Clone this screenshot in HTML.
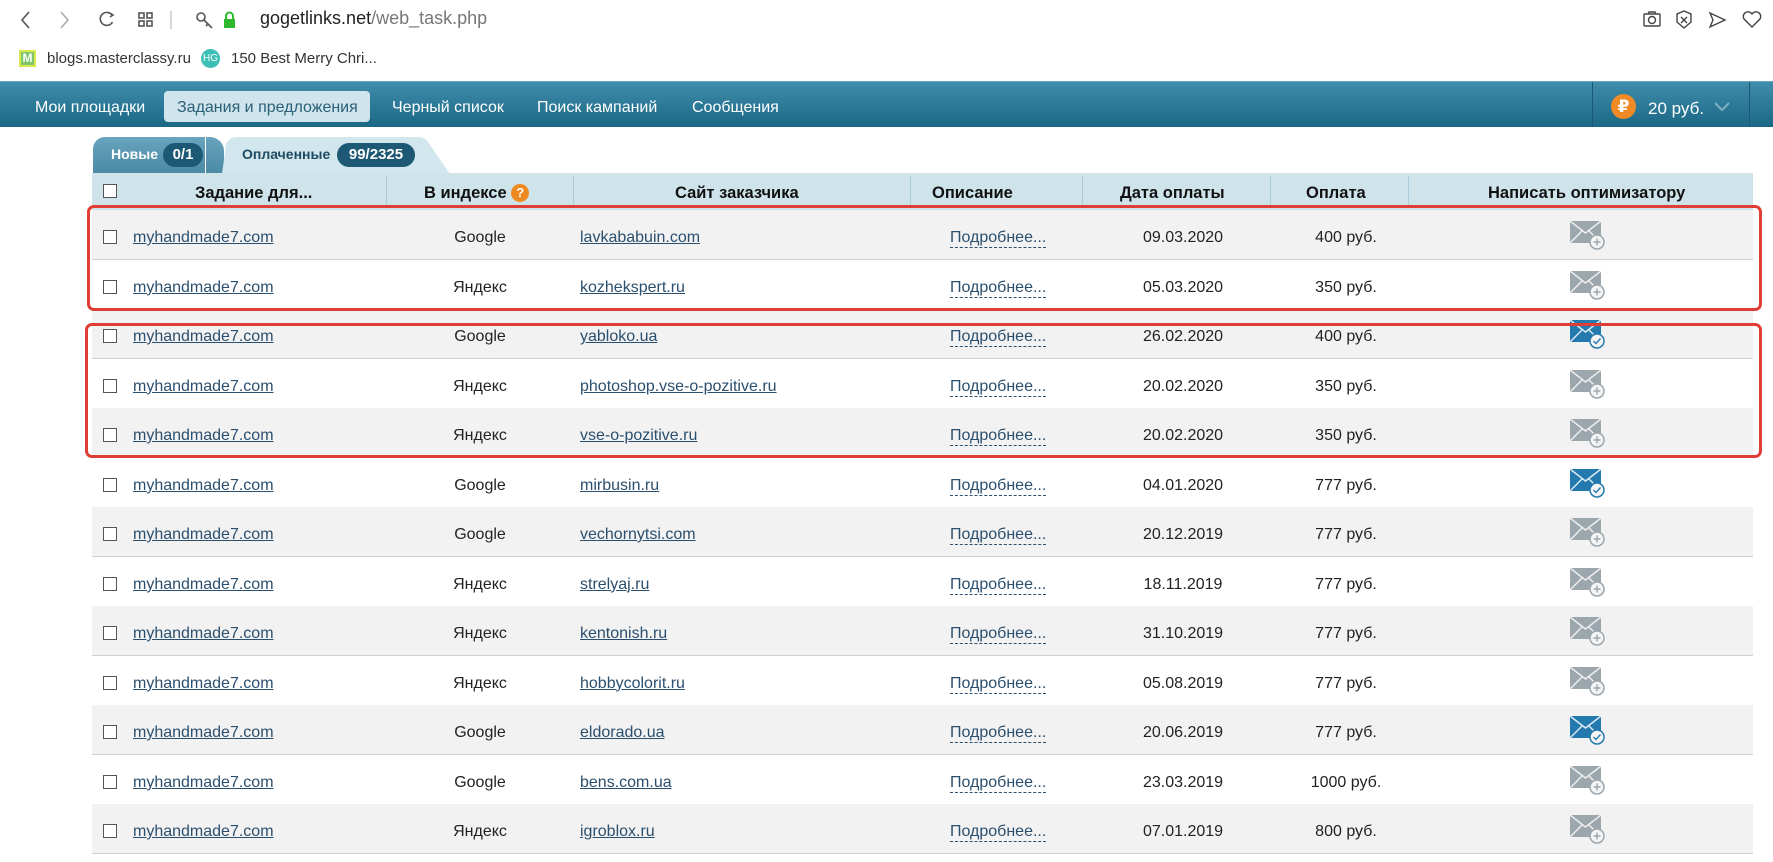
<!DOCTYPE html>
<html><head><meta charset="utf-8"><style>
*{margin:0;padding:0;box-sizing:border-box}
body{width:1773px;height:862px;overflow:hidden;background:#fff;font-family:"Liberation Sans","DejaVu Sans",sans-serif;position:relative;color:#222}
.a{position:absolute;white-space:nowrap}
.nav{position:absolute;left:0;top:81px;width:1773px;height:46px;background:linear-gradient(#3f8dab,#1b6886);border-top:1px solid #6aa7bf}
.nav .a{color:#fff;font-size:16px;top:17px}
.row{position:absolute;left:92px;width:1661px;height:50px;border-bottom:1px solid #c9d1d6}
.row .a{font-size:16px;top:19px}
.lnk{color:#2b4f6e;text-decoration:underline}
.desc{color:#2b4f6e;border-bottom:1px dashed #2b4f6e;line-height:18px}
.cb{position:absolute;left:11px;top:20px;width:14px;height:14px;border:1.5px solid #555;background:#fff}
.hd{position:absolute;left:92px;top:173px;width:1661px;height:37px;background:#cfe3eb}
.hd .a{font-weight:bold;font-size:16.5px;top:11px;color:#111}
.sep{position:absolute;top:3px;width:1px;height:30px;background:#aacbd9}
.red{position:absolute;border:3.5px solid #df3d35;border-radius:7px}
</style></head><body>
<svg class="a" style="left:18px;top:8px" width="260" height="24" viewBox="0 0 260 24" fill="none" stroke="#555" stroke-width="1.6">
<path d="M11 4 L4 12 L11 20"/><path d="M43 4 L50 12 L43 20" stroke="#aaa"/>
<path d="M94 7 A6.5 6.5 0 1 0 94.5 14"/><path d="M92 5 L95 7 L92 9" />
<rect x="121" y="5" width="5" height="5"/><rect x="129" y="5" width="5" height="5"/><rect x="121" y="13" width="5" height="5"/><rect x="129" y="13" width="5" height="5"/>
<path d="M153 3 V21" stroke="#ccc"/>
<circle cx="183" cy="9" r="4"/><path d="M186 12 L194 20 M190 16 L188 18"/>
<rect x="206" y="11" width="11" height="9" fill="#2db82d" stroke="none"/><path d="M208 11 V8 A3.5 3.5 0 0 1 215 8 V11" stroke="#2db82d" stroke-width="2"/>
</svg>
<div class="a" style="left:260px;top:8px;font-size:18px;color:#222">gogetlinks.net<span style="color:#777">/web_task.php</span></div>
<svg class="a" style="left:1640px;top:8px" width="130" height="24" viewBox="0 0 130 24" fill="none" stroke="#444" stroke-width="1.4">
<rect x="4" y="6" width="16" height="12" rx="1"/><circle cx="12" cy="12" r="3.5"/><path d="M8 6 L9 4 H15 L16 6"/>
<path d="M44 3 L51 6 V14 L44 20 L37 14 V6 Z"/><path d="M41 9 L47 15 M47 9 L41 15"/>
<path d="M70 5 L85 12 L70 19 L73 12 Z"/>
<path d="M112 19 L104 11 A4 4 0 0 1 112 6 A4 4 0 0 1 120 11 Z"/>
</svg>
<div class="a" style="left:19px;top:50px;width:17px;height:17px;background:#7fc66a;border:2px solid #d9e84a;color:#fff;font-size:12px;font-weight:bold;text-align:center;line-height:13px">M</div>
<div class="a" style="left:47px;top:50px;font-size:15px;color:#333">blogs.masterclassy.ru</div>
<div class="a" style="left:201px;top:49px;width:19px;height:19px;border-radius:50%;background:#3cbfb5;color:#fff;font-size:10px;text-align:center;line-height:19px">HG</div>
<div class="a" style="left:231px;top:50px;font-size:15px;color:#333">150 Best Merry Chri...</div>
<div class="nav">
<div class="a" style="left:35px">Мои площадки</div>
<div class="a" style="left:164px;top:9px;width:206px;height:31px;background:#cfe4ec;border-radius:4px"></div>
<div class="a" style="left:177px;color:#2a5f78">Задания и предложения</div>
<div class="a" style="left:392px">Черный список</div>
<div class="a" style="left:537px">Поиск кампаний</div>
<div class="a" style="left:692px">Сообщения</div>
<div class="a" style="left:1592px;top:0;width:1px;height:45px;background:#1a5a75"></div>
<div class="a" style="left:1611px;top:12px;width:25px;height:25px;border-radius:50%;background:#f08a24;color:#fff;font-weight:bold;font-size:17px;text-align:center;line-height:25px">₽</div>
<div class="a" style="left:1648px;font-size:17px">20 руб.</div>
<svg class="a" style="left:1714px;top:20px" width="16" height="10"><path d="M1 1 L8 8 L15 1" stroke="#7fb0c5" stroke-width="2" fill="none"/></svg>
<div class="a" style="left:1749px;top:0;width:1px;height:45px;background:#1a5a75"></div>
</div>
<div class="a" style="left:93px;top:137px;width:131px;height:36px;background:linear-gradient(#6aa4be,#4b89a5);border-radius:12px 14px 0 0"></div>
<div class="a" style="left:205px;top:137px;width:1px;height:36px;background:#fff"></div>
<div class="a" style="left:111px;top:146px;font-size:14px;font-weight:bold;color:#fff">Новые</div>
<div class="a" style="left:163px;top:143px;width:40px;height:24px;border-radius:12px;background:#1d5874;color:#fff;font-weight:bold;font-size:15px;text-align:center;line-height:24px">0/1</div>
<svg class="a" style="left:222px;top:137px" width="228" height="37"><path d="M0 37 L4 8 Q6 0 16 0 H196 Q204 0 208 8 L228 37 Z" fill="#d2e6ee"/></svg>
<div class="a" style="left:242px;top:146px;font-size:14px;font-weight:bold;color:#1e4a62">Оплаченные</div>
<div class="a" style="left:337px;top:143px;width:78px;height:24px;border-radius:12px;background:#1d5874;color:#fff;font-weight:bold;font-size:15px;text-align:center;line-height:24px">99/2325</div>
<div class="hd">
<div class="cb" style="top:11px"></div>
<div class="a" style="left:103px">Задание для...</div>
<div class="sep" style="left:294px"></div>
<div class="a" style="left:332px">В индексе <span style="display:inline-block;width:18px;height:18px;border-radius:50%;background:#ef8a22;color:#fff;font-size:13px;text-align:center;line-height:18px;vertical-align:1px">?</span></div>
<div class="sep" style="left:481px"></div>
<div class="a" style="left:583px">Сайт заказчика</div>
<div class="sep" style="left:818px"></div>
<div class="a" style="left:840px">Описание</div>
<div class="sep" style="left:990px"></div>
<div class="a" style="left:1028px">Дата оплаты</div>
<div class="sep" style="left:1178px"></div>
<div class="a" style="left:1214px">Оплата</div>
<div class="sep" style="left:1316px"></div>
<div class="a" style="left:1396px">Написать оптимизатору</div>
</div>
<div id="rows"></div>
<svg width="0" height="0" style="position:absolute"><defs>
<g id="eg"><rect x="0" y="0" width="31" height="22" fill="#9ca6ad"/><path d="M0 0 L15.5 12 L31 0 M0 22 L12 10 M31 22 L19 10" stroke="#eee" stroke-width="1.5" fill="none"/><circle cx="27" cy="21" r="7" fill="#f4f4f4" stroke="#9ca6ad" stroke-width="1.5"/><path d="M23.5 21 H30.5 M27 17.5 V24.5" stroke="#9ca6ad" stroke-width="1.4"/></g>
<g id="eb"><rect x="0" y="0" width="31" height="22" fill="#2479ae"/><path d="M0 0 L15.5 12 L31 0 M0 22 L12 10 M31 22 L19 10" stroke="#dbe9f2" stroke-width="1.5" fill="none"/><circle cx="27" cy="21" r="7" fill="#f4f4f4" stroke="#2479ae" stroke-width="1.5"/><path d="M23.5 21 L26 23.5 L30.5 18.5" stroke="#2479ae" stroke-width="1.4" fill="none"/></g>
</defs></svg>
<script>
var d=[["Google","lavkababuin.com","09.03.2020","400 руб.",0],["Яндекс","kozhekspert.ru","05.03.2020","350 руб.",0],["Google","yabloko.ua","26.02.2020","400 руб.",1],["Яндекс","photoshop.vse-o-pozitive.ru","20.02.2020","350 руб.",0],["Яндекс","vse-o-pozitive.ru","20.02.2020","350 руб.",0],["Google","mirbusin.ru","04.01.2020","777 руб.",1],["Google","vechornytsi.com","20.12.2019","777 руб.",0],["Яндекс","strelyaj.ru","18.11.2019","777 руб.",0],["Яндекс","kentonish.ru","31.10.2019","777 руб.",0],["Яндекс","hobbycolorit.ru","05.08.2019","777 руб.",0],["Google","eldorado.ua","20.06.2019","777 руб.",1],["Google","bens.com.ua","23.03.2019","1000 руб.",0],["Яндекс","igroblox.ru","07.01.2019","800 руб.",0]];
var h="";
d.forEach(function(r,i){var t=210+i*49.5;
h+='<div class="row" style="top:'+t+'px;background:'+(i%2==0?'#f2f2f2':'#fff')+'"><div class="cb"></div>'+
'<div class="a lnk" style="left:41px">myhandmade7.com</div>'+
'<div class="a" style="left:388px;width:0"><span style="position:absolute;transform:translateX(-50%)">'+r[0]+'</span></div>'+
'<div class="a lnk" style="left:488px">'+r[1]+'</div>'+
'<div class="a desc" style="left:858px">Подробнее...</div>'+
'<div class="a" style="left:1091px;width:0"><span style="position:absolute;transform:translateX(-50%)">'+r[2]+'</span></div>'+
'<div class="a" style="left:1254px;width:0"><span style="position:absolute;transform:translateX(-50%)">'+r[3]+'</span></div>'+
'<svg class="a" style="left:1478px;top:11px" width="36" height="30"><use href="#'+(r[4]?'eb':'eg')+'"/></svg></div>';});
h+='<div class="red" style="left:87px;top:205px;width:1675px;height:106px"></div><div class="red" style="left:85px;top:323px;width:1677px;height:135px"></div>';
document.getElementById("rows").innerHTML=h;
</script>
</body></html>
